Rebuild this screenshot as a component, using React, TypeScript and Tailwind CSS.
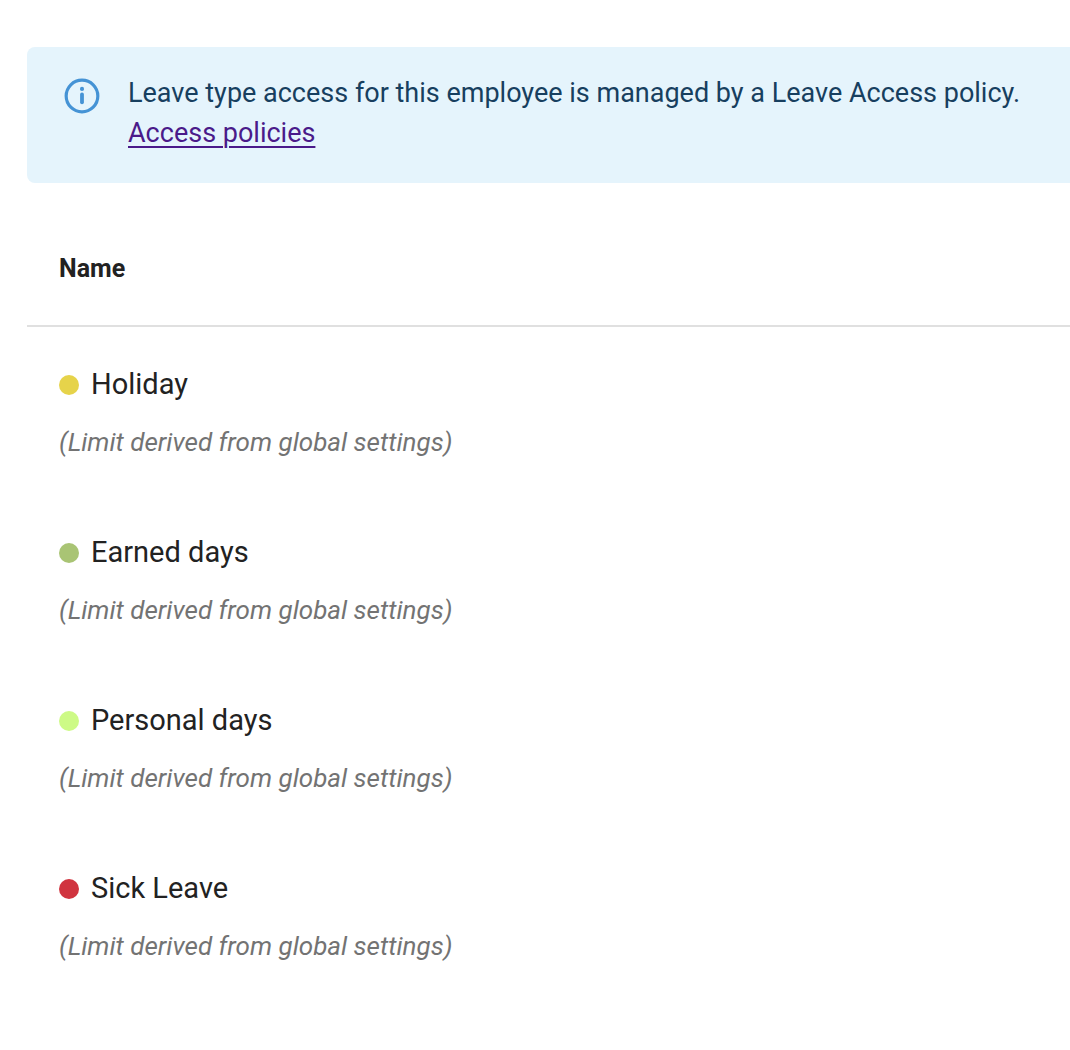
const rows = [
  { name: "Holiday", dot: "bg-[#e6d34a]" },
  { name: "Earned days", dot: "bg-[#a9c474]" },
  { name: "Personal days", dot: "bg-[#cdfa86]" },
  { name: "Sick Leave", dot: "bg-[#d0343f]" },
];

export default function App() {
  return (
    <div className="w-[1070px] h-[1050px] overflow-hidden bg-white font-[family-name:Roboto]">
      <div className="ml-[27px] mt-[47px] w-[1100px]">
        <div className="flex gap-[27px] rounded-[8px] bg-[#e5f4fc] pl-[36px] pt-[26px] h-[136px]">
          <svg width="38" height="38" viewBox="0 0 24 24" fill="none" stroke="#4593d5" strokeWidth="2" strokeLinecap="round" className="mt-[4px] shrink-0">
            <circle cx="12" cy="12" r="10" />
            <path d="M12 16v-5" strokeWidth="2.4" />
            <path d="M12 7.5h.01" strokeWidth="2.6" />
          </svg>
          <div className="text-[27px] leading-[40px] text-[#173f5f]">
            <div className="whitespace-nowrap">Leave type access for this employee is managed by a Leave Access policy.</div>
            <a className="text-[#4a1a8a] underline underline-offset-4 decoration-[2px]">Access policies</a>
          </div>
        </div>
        <div className="h-[144px] flex items-center pl-[32px] text-[25px] font-bold text-[#222] border-b-2 border-[#e0e0e0] pt-[30px]">Name</div>
        <div className="pt-[38px]">
          {rows.map((r) => (
            <div key={r.name} className="h-[168px] pl-[32px]">
              <div className="flex items-center gap-[12px] h-[40px]">
                <span className={`w-[20px] h-[20px] rounded-full ${r.dot}`} />
                <span className="text-[29px] text-[#222]">{r.name}</span>
              </div>
              <div className="mt-[18px] italic text-[26px] text-[#737373]">(Limit derived from global settings)</div>
            </div>
          ))}
        </div>
      </div>
    </div>
  );
}
